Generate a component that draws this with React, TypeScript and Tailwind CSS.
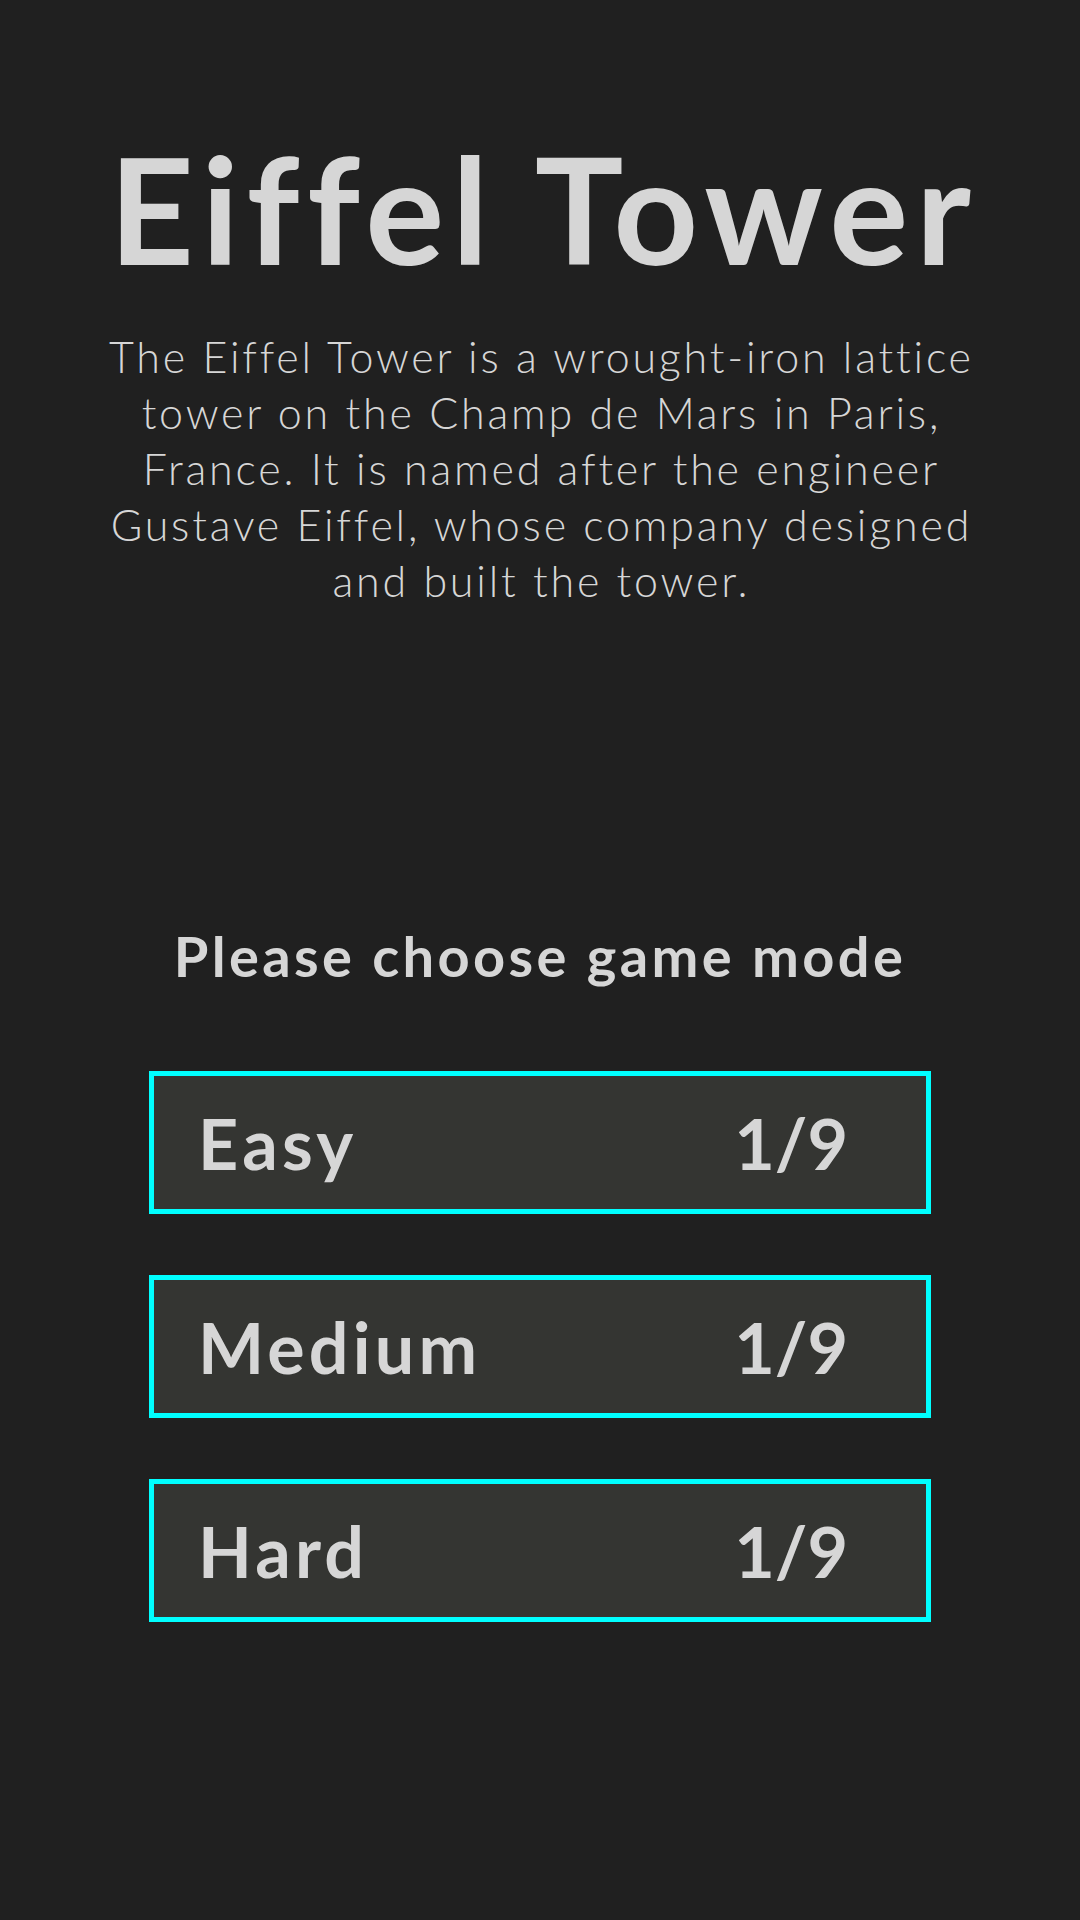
const modes = [
  { label: "Easy", progress: "1/9" },
  { label: "Medium", progress: "1/9" },
  { label: "Hard", progress: "1/9" },
];

export default function App() {
  return (
    <div className="flex min-h-[1920px] w-full flex-col items-center bg-[#202020] pt-[134px] font-['Lato',_'Noto_Sans',_sans-serif] text-[#d6d6d6] [font-variant-ligatures:none]">
      <h1 className="pl-[0.05em] text-[148px] font-bold leading-none tracking-[0.05em]">Eiffel Tower</h1>
      <p className="mt-[47px] pl-[0.065em] text-center text-[43px] font-light leading-[56px] tracking-[0.065em]">
        The Eiffel Tower is a wrought-iron lattice
        <br />
        tower on the Champ de Mars in Paris,
        <br />
        France. It is named after the engineer
        <br />
        Gustave Eiffel, whose company designed
        <br />
        and built the tower.
      </p>
      <h2 className="mt-[319px] text-[56px] font-bold leading-none tracking-[0.06em]">
        Please choose game mode
      </h2>
      <div className="mt-[87px] flex flex-col gap-[61px]">
        {modes.map((mode) => (
          <button
            key={mode.label}
            className="flex h-[143px] w-[782px] items-center justify-between border-[5px] border-[#00ffff] bg-[#343532] pl-[44px] pr-[78px] text-[70px] font-bold leading-none text-[#d6d6d6]"
          >
            <span className="tracking-[0.06em]">{mode.label}</span>
            <span>{mode.progress}</span>
          </button>
        ))}
      </div>
    </div>
  );
}
